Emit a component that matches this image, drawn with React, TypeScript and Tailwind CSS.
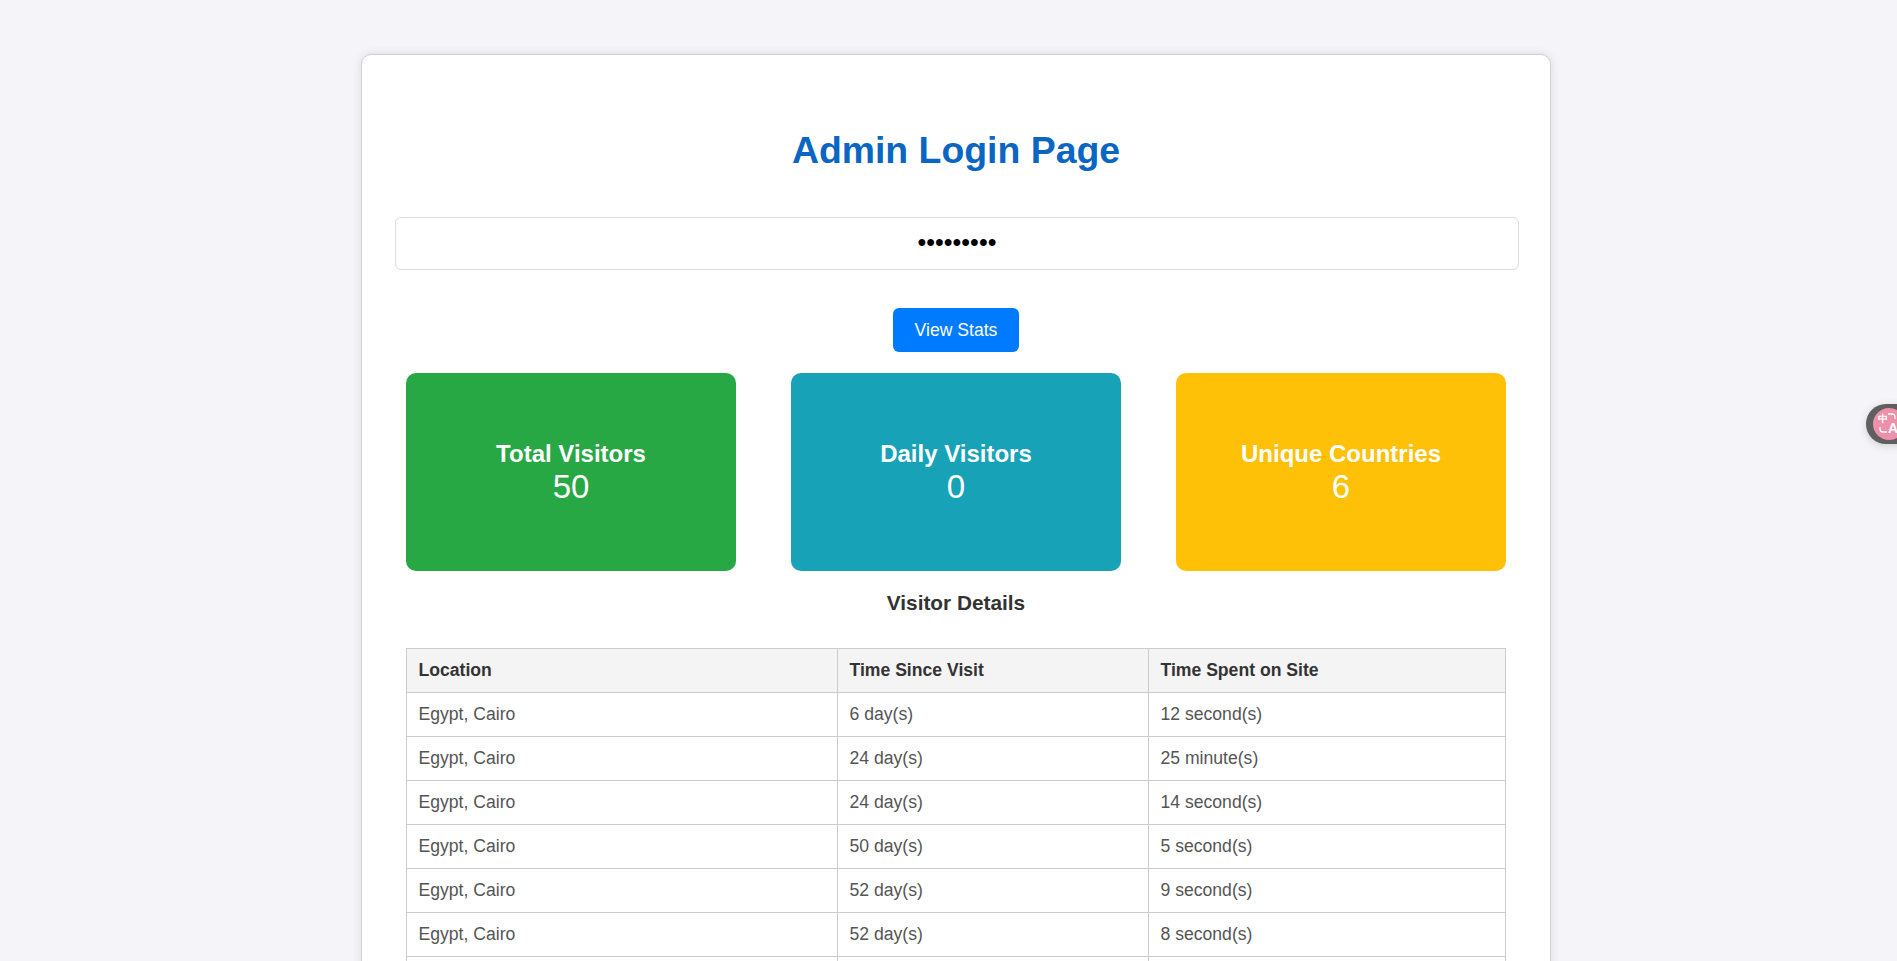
const visits = [
  ["Egypt, Cairo", "6 day(s)", "12 second(s)"],
  ["Egypt, Cairo", "24 day(s)", "25 minute(s)"],
  ["Egypt, Cairo", "24 day(s)", "14 second(s)"],
  ["Egypt, Cairo", "50 day(s)", "5 second(s)"],
  ["Egypt, Cairo", "52 day(s)", "9 second(s)"],
  ["Egypt, Cairo", "52 day(s)", "8 second(s)"],
];

const stats = [
  { label: "Total Visitors", value: "50", color: "bg-[#28a745]" },
  { label: "Daily Visitors", value: "0", color: "bg-[#17a2b8]" },
  { label: "Unique Countries", value: "6", color: "bg-[#ffc107]" },
];

export default function App() {
  return (
    <div className="relative h-screen overflow-hidden bg-[#f4f4f9] pt-[54px] pl-[361px] font-['Liberation_Sans',Arial,sans-serif]">
      <div className="w-[1190px] rounded-[10px] border border-[#d0d0d0] bg-white px-8 pt-[73px] pb-8 shadow-[0_0_10px_rgba(0,0,0,0.1)]">
        <h1 className="text-center text-[37.4px] leading-[44px] font-bold text-[#0a66c2]">Admin Login Page</h1>

        <input
          type="password"
          readOnly
          defaultValue="123456789"
          className="mt-[45px] ml-px block h-[53px] w-[1124px] rounded-[6px] border border-[#ddd] bg-white pb-[2px] text-center text-[25px] text-black outline-none"
        />

        <div className="mt-[38px] flex justify-center">
          <button className="h-[44px] w-[126px] rounded-[6px] bg-[#007bff] text-[17.6px] text-white">View Stats</button>
        </div>

        <div className="mt-[21px] flex justify-between px-3">
          {stats.map((s) => (
            <div
              key={s.label}
              className={`flex h-[198px] w-[330px] flex-col items-center justify-center rounded-[10px] text-white ${s.color}`}
            >
              <div className="text-[24px] leading-[28px] font-bold">{s.label}</div>
              <div className="text-[33px] leading-[37px]">{s.value}</div>
            </div>
          ))}
        </div>

        <h2 className="mt-[20px] text-center text-[20.8px] leading-[24px] font-bold text-[#333]">Visitor Details</h2>

        <div className="mt-[33px] px-3">
          <table className="w-full table-fixed border-collapse text-[17.6px] leading-[21px]">
            <colgroup>
              <col className="w-[431px]" />
              <col className="w-[311px]" />
              <col />
            </colgroup>
            <thead>
              <tr className="h-[44px] bg-[#f4f4f4] text-left text-[#333]">
                <th className="border border-[#ccc] px-[11.5px] font-bold">Location</th>
                <th className="border border-[#ccc] px-[11.5px] font-bold">Time Since Visit</th>
                <th className="border border-[#ccc] px-[11.5px] font-bold">Time Spent on Site</th>
              </tr>
            </thead>
            <tbody className="text-[#555]">
              {visits.map((v, i) => (
                <tr key={i} className="h-[44px]">
                  <td className="border border-[#ccc] px-[11.5px]">{v[0]}</td>
                  <td className="border border-[#ccc] px-[11.5px]">{v[1]}</td>
                  <td className="border border-[#ccc] px-[11.5px]">{v[2]}</td>
                </tr>
              ))}
              <tr className="h-[44px]">
                <td className="border border-[#ccc]" />
                <td className="border border-[#ccc]" />
                <td className="border border-[#ccc]" />
              </tr>
            </tbody>
          </table>
        </div>
      </div>

      {/* translate widget stuck to the right edge */}
      <div className="absolute top-[404px] left-[1866px] flex h-[40px] w-[50px] items-center rounded-full bg-[#5f5f5f] pl-[7px] shadow-[0_2px_8px_rgba(0,0,0,0.15)]">
        <div className="relative h-[32px] w-[32px] shrink-0 rounded-full bg-[#ee8fab] text-white">
          <span className="absolute top-[5px] left-[5px] text-[10px] leading-[12px] font-bold">中</span>
          <span className="absolute top-[13px] left-[15px] text-[14px] leading-[15px] font-bold">A</span>
          <svg viewBox="0 0 32 32" className="absolute inset-0 h-full w-full" fill="none" stroke="white" strokeWidth="1.3">
            <path d="M15 6h4a3 3 0 0 1 3 3v2" />
            <path d="M7 19v2a3 3 0 0 0 3 3h4" />
          </svg>
        </div>
      </div>
    </div>
  );
}
